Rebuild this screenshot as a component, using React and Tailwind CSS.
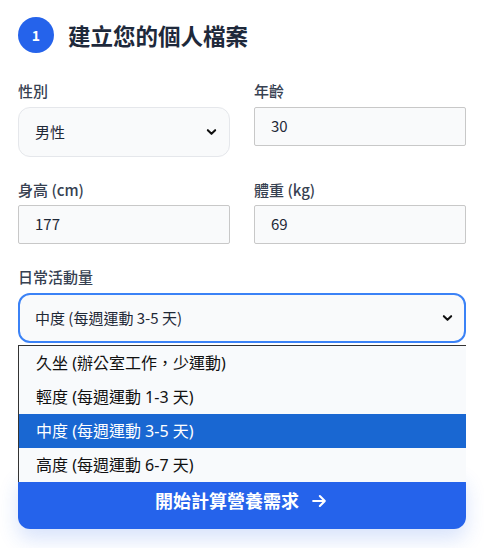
import React from "react";

const Chevron = ({ className }) => (
  <svg viewBox="0 0 12 8" className={className} fill="none" stroke="#111" strokeWidth="2.2" strokeLinecap="round" strokeLinejoin="round">
    <path d="M2 2l4 4 4-4" />
  </svg>
);

export default function App() {
  const font = { fontFamily: '"Noto Sans CJK TC", "Noto Sans", sans-serif' };
  const options = [
    "久坐 (辦公室工作，少運動)",
    "輕度 (每週運動 1-3 天)",
    "中度 (每週運動 3-5 天)",
    "高度 (每週運動 6-7 天)",
  ];
  return (
    <div className="relative w-[484px] h-[548px] bg-white overflow-hidden" style={font}>
      <div className="pl-[18px] pr-[18px] pt-[17px]">
        <div className="flex items-center gap-[14px] h-[36px]">
          <div className="w-[36px] h-[36px] rounded-full bg-[#2563eb] text-white flex items-center justify-center text-[14px] font-bold">1</div>
          <div className="text-[22.5px] font-bold text-[#1e293b] leading-none">建立您的個人檔案</div>
        </div>
        <div className="grid grid-cols-2 gap-x-6 gap-y-[23px] mt-[28px] items-start">
          <div>
            <div className="text-[15px] leading-[20px] font-medium text-[#374151] mb-[6px]">性別</div>
            <div className="h-[50px] rounded-xl border border-[#e5e7eb] bg-[#f9fafb] flex items-center justify-between pl-[16px] pr-[12px] text-[15px] text-[#1f2937]">
              <span>男性</span>
              <Chevron className="w-[11px] h-[8px]" />
            </div>
          </div>
          <div>
            <div className="text-[15px] leading-[20px] font-medium text-[#374151] mb-[6px]">年齡</div>
            <div className="h-[39px] rounded-[2px] border border-[#c8c8c8] bg-[#f9fafb] flex items-center pl-[16px] text-[15px] text-[#1f2937]">30</div>
          </div>
          <div>
            <div className="text-[15px] leading-[20px] font-medium text-[#374151] mb-[5px]">身高 (cm)</div>
            <div className="h-[39px] rounded-[2px] border border-[#c8c8c8] bg-[#f9fafb] flex items-center pl-[16px] text-[15px] text-[#1f2937]">177</div>
          </div>
          <div>
            <div className="text-[15px] leading-[20px] font-medium text-[#374151] mb-[5px]">體重 (kg)</div>
            <div className="h-[39px] rounded-[2px] border border-[#c8c8c8] bg-[#f9fafb] flex items-center pl-[16px] text-[15px] text-[#1f2937]">69</div>
          </div>
        </div>
        <div className="mt-[23px]">
          <div className="text-[15px] leading-[20px] font-medium text-[#374151] mb-[6px]">日常活動量</div>
          <div className="h-[50px] rounded-xl border-2 border-[#3b82f6] bg-[#f9fafb] flex items-center justify-between pl-[15px] pr-[11px] text-[15px] text-[#1f2937]">
            <span>中度 (每週運動 3-5 天)</span>
            <Chevron className="w-[11px] h-[8px]" />
          </div>
        </div>
        <button className="mt-[129px] w-full h-[57px] rounded-xl bg-[#2563eb] text-white text-[18px] font-bold flex items-center justify-center gap-[10px] shadow-[0_10px_20px_rgba(37,99,235,0.18)]">
          <span>開始計算營養需求</span>
          <svg viewBox="0 0 24 24" className="w-[20px] h-[20px]" fill="none" stroke="white" strokeWidth="2.5" strokeLinecap="round" strokeLinejoin="round">
            <path d="M5 12h14M13 6l6 6-6 6" />
          </svg>
        </button>
      </div>
      <div className="absolute left-[18px] top-[345px] w-[448px] bg-[#f8fafc] border-l border-t border-[#333]" style={{ fontFamily: '"Noto Sans", "Noto Sans CJK TC", sans-serif' }}>
        {options.map((o, i) => (
          <div
            key={o}
            className={
              "h-[34px] flex items-center pl-[17px] text-[16px] " +
              (i === 2 ? "bg-[#1967d2] text-white" : "text-[#111]")
            }
          >
            {o}
          </div>
        ))}
      </div>
    </div>
  );
}
